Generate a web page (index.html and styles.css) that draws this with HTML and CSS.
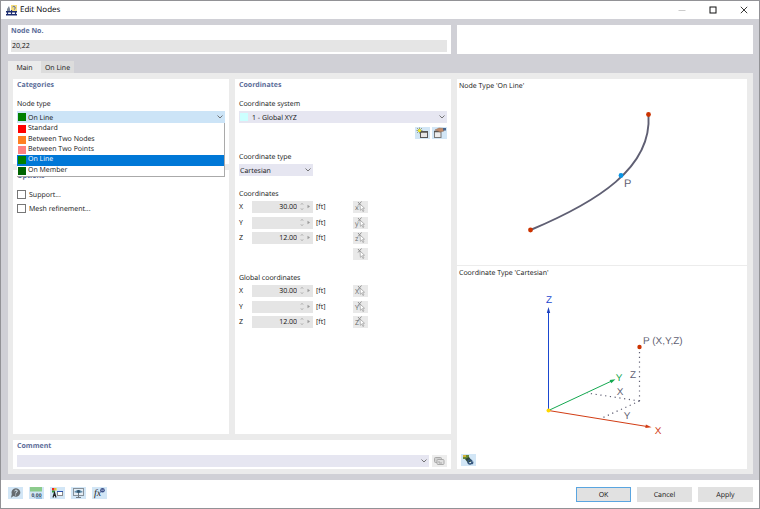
FILE: index.html
```html
<!DOCTYPE html>
<html lang="en">

<head>
  <meta charset="UTF-8">
  <title>Edit Nodes</title>
  <link rel="stylesheet" href="styles.css">
</head>

<body>
  <svg class="symbols" aria-hidden="true">
    <symbol id="chevron" viewBox="0 0 6 4">
      <path d="M0.5 0.5L3 3L5.5 0.5" fill="none" stroke="#666" stroke-width="0.9" />
    </symbol>
    <symbol id="spin" viewBox="0 0 12 12">
      <path d="M2 3.5L3 2.5L4 3.500M2 7.500L3 8.500L4 7.500" fill="none" stroke="#888" stroke-width="0.8" />
      <path d="M8.500 3.800L11 5.500L8.500 7.200Z" fill="#999" />
    </symbol>
    <symbol id="pick" viewBox="0 0 15 12">
      <path d="M5 1L8 4.500M8.500 0.500L5 4.500" stroke="#888" stroke-width="0.9" />
      <path d="M7 3L11.500 7.200L9.600 7.400L11 10L9.900 10.500L8.800 8L7.400 9.300Z" fill="#fff" stroke="#999" stroke-width="0.7" />
    </symbol>
  </svg>

  <div class="window">
    <header class="titlebar">
      <svg class="app_icon" viewBox="0 0 12 11">
        <rect x="5" y="0" width="6" height="6" fill="#f4dc7c" />
        <path d="M6.500 2Q8 0.500 9 2T8 4.500" fill="none" stroke="#5a6fae" />
        <path d="M1 4L3 1L4 4V7H1Z" fill="#7d8898" />
        <path d="M0 6H11V7.500H0ZM0 9H11V10.500H0Z" fill="#1d2d70" />
        <path d="M1.500 7V10M5.500 5V10M9.500 7V10" stroke="#1d2d70" stroke-width="1.2" />
      </svg>
      <h1>Edit Nodes</h1>
      <button class="win_btn" aria-label="Minimize"><svg viewBox="0 0 8 8"><path d="M0.500 4.500H7.500" stroke="#ccc" /></svg></button>
      <button class="win_btn" aria-label="Maximize"><svg viewBox="0 0 8 8"><rect x="1" y="1" width="6" height="6" fill="none" stroke="#111" /></svg></button>
      <button class="win_btn" aria-label="Close"><svg viewBox="0 0 8 8"><path d="M0.800 0.800L7.200 7.200M7.200 0.800L0.800 7.200" stroke="#222" stroke-width="0.9" /></svg></button>
    </header>

    <main class="content">
      <div class="top_row">
        <section class="panel node_no">
          <h2><label for="nodeNo">Node No.</label></h2>
          <input id="nodeNo" type="text" value="20,22">
        </section>
        <section class="panel"></section>
      </div>

      <nav class="tabs">
        <button class="tab active">Main</button>
        <button class="tab">On Line</button>
      </nav>

      <div class="page">
        <div class="col_left">
          <section class="panel categories">
            <h2>Categories</h2>
            <label class="caption" for="nodeType">Node type</label>
            <div class="combo open">
              <span class="swatch green"></span>
              <select id="nodeType">
                <option>On Line</option>
              </select>
              <svg class="chevron"><use href="#chevron" /></svg>
              <ul class="dropdown" role="listbox">
                <li role="option"><span class="swatch red"></span>Standard</li>
                <li role="option"><span class="swatch orange"></span>Between Two Nodes</li>
                <li role="option"><span class="swatch pink"></span>Between Two Points</li>
                <li role="option" class="selected" aria-selected="true"><span class="swatch green"></span>On Line</li>
                <li role="option"><span class="swatch darkgreen"></span>On Member</li>
              </ul>
            </div>
          </section>
          <section class="panel options">
            <h2>Options</h2>
            <label class="check"><input type="checkbox">Support...</label>
            <label class="check"><input type="checkbox">Mesh refinement...</label>
          </section>
        </div>

        <section class="panel coordinates">
          <h2>Coordinates</h2>
          <label class="caption" for="coordSystem">Coordinate system</label>
          <div class="combo">
            <span class="swatch cyan"></span>
            <select id="coordSystem" class="wide_indent">
              <option>1 - Global XYZ</option>
            </select>
            <svg class="chevron"><use href="#chevron" /></svg>
          </div>
          <div class="cs_buttons">
            <button class="icon_btn" aria-label="New coordinate system">
              <svg viewBox="0 0 15 12"><rect x="5.500" y="4.500" width="7" height="6" fill="#e4e4e4" stroke="#555" /><path d="M5 5H13" stroke="#555" stroke-width="1.500" /><path d="M2 1L7 6M7 1L2 6M4.500 0.500V6.500M1.500 3.500H7.500" stroke="#6c7438" stroke-width="0.6" /><circle cx="4.500" cy="3.500" r="1.500" fill="#f4ec20" /></svg>
            </button>
            <button class="icon_btn" aria-label="Edit coordinate system">
              <svg viewBox="0 0 15 12"><rect x="2.500" y="4.500" width="6.500" height="6" fill="#ececec" stroke="#777" /><path d="M2 4.500H9" stroke="#555" stroke-width="1.500" /><path d="M3 3L7 1L12 1.500V4L8 5L6 4Z" fill="#c38b68" stroke="#8b6650" stroke-width="0.5" /><path d="M11 1H14V3.500H11Z" fill="#49658b" /></svg>
            </button>
          </div>
          <label class="caption" for="coordType">Coordinate type</label>
          <div class="combo narrow">
            <select id="coordType">
              <option>Cartesian</option>
            </select>
            <svg class="chevron"><use href="#chevron" /></svg>
          </div>

          <h3 class="caption">Coordinates</h3>
          <div class="rows four">
            <div class="row">
              <label for="x">X</label>
              <div class="num"><input id="x" type="text" value="30.00"><svg><use href="#spin" /></svg></div>
              <span>[ft]</span>
              <button class="pick_btn" aria-label="Pick x"><span>x</span><svg><use href="#pick" /></svg></button>
            </div>
            <div class="row">
              <label for="y">Y</label>
              <div class="num"><input id="y" type="text"><svg><use href="#spin" /></svg></div>
              <span>[ft]</span>
              <button class="pick_btn" aria-label="Pick y"><span>y</span><svg><use href="#pick" /></svg></button>
            </div>
            <div class="row">
              <label for="z">Z</label>
              <div class="num"><input id="z" type="text" value="12.00"><svg><use href="#spin" /></svg></div>
              <span>[ft]</span>
              <button class="pick_btn" aria-label="Pick z"><span>z</span><svg><use href="#pick" /></svg></button>
            </div>
            <div class="row">
              <button class="pick_btn" aria-label="Pick point"><svg><use href="#pick" /></svg></button>
            </div>
          </div>

          <h3 class="caption">Global coordinates</h3>
          <div class="rows three">
            <div class="row">
              <label for="gx">X</label>
              <div class="num"><input id="gx" type="text" value="30.00"><svg><use href="#spin" /></svg></div>
              <span>[ft]</span>
              <button class="pick_btn" aria-label="Pick global X"><span>X</span><svg><use href="#pick" /></svg></button>
            </div>
            <div class="row">
              <label for="gy">Y</label>
              <div class="num"><input id="gy" type="text"><svg><use href="#spin" /></svg></div>
              <span>[ft]</span>
              <button class="pick_btn" aria-label="Pick global Y"><span>Y</span><svg><use href="#pick" /></svg></button>
            </div>
            <div class="row">
              <label for="gz">Z</label>
              <div class="num"><input id="gz" type="text" value="12.00"><svg><use href="#spin" /></svg></div>
              <span>[ft]</span>
              <button class="pick_btn" aria-label="Pick global Z"><span>Z</span><svg><use href="#pick" /></svg></button>
            </div>
          </div>
        </section>

        <section class="panel preview">
          <div class="figure line_figure">
            <h3>Node Type 'On Line'</h3>
            <svg viewBox="0 0 290 172">
              <path d="M73.500 137C140 109 195 75 191.500 22" fill="none" stroke="#5f5f73" stroke-width="1.900" />
              <circle cx="73.500" cy="137" r="2.400" fill="#cc3300" />
              <circle cx="191.500" cy="21.500" r="2.400" fill="#cc3300" />
              <circle cx="164" cy="82.500" r="2.400" fill="#0a96e6" />
              <text class="point" x="167" y="94">P</text>
            </svg>
          </div>
          <div class="figure axes_figure">
            <h3>Coordinate Type 'Cartesian'</h3>
            <svg viewBox="0 0 290 165">
              <g fill="none" stroke="#5f5f73" stroke-width="1.200" stroke-dasharray="1.200 3.600">
                <path d="M182.500 72V121" />
                <path d="M182.500 121L130 113" />
                <path d="M182.500 121L145 138" />
              </g>
              <path d="M91.500 130.500V31" stroke="#1a47d0" />
              <path d="M91.500 27L93.200 33H89.800Z" fill="#1a3fc0" />
              <path d="M91.500 130.500L154 101.300" stroke="#14a850" />
              <path d="M158.500 99.200L154.200 103.200L152.600 99.900Z" fill="#14a850" />
              <path d="M91.500 130.500L190 146.500" stroke="#d23c14" />
              <path d="M194.500 147.300L188.300 148.100L188.900 144.600Z" fill="#d23c14" />
              <circle cx="91.500" cy="130.500" r="2" fill="#ffd800" />
              <circle cx="182.500" cy="67" r="2.200" fill="#cc3300" />
              <g text-anchor="middle">
                <text class="axis_z" x="92" y="23">Z</text>
                <text class="axis_y" x="162" y="101">Y</text>
                <text class="axis_x" x="201" y="154">X</text>
                <text x="176" y="98">Z</text>
                <text x="163" y="115">X</text>
                <text x="170" y="139">Y</text>
              </g>
              <text x="186" y="64">P (X,Y,Z)</text>
            </svg>
          </div>
          <button class="icon_btn" aria-label="Preview settings">
            <svg viewBox="0 0 15 12"><rect x="2" y="1" width="6" height="4" fill="#688a36" /><path d="M2 1H5V3H2Z" fill="#d4b33a" /><path d="M4 5L8 3L11 7L7 9Z" fill="#2d4a3a" /><circle cx="9" cy="8" r="2" fill="none" stroke="#33547c" stroke-width="1.300" /><path d="M10 9L12.500 7.500L12 10.500Z" fill="#33547c" /></svg>
          </button>
        </section>

        <section class="panel comment">
          <h2><label for="comment">Comment</label></h2>
          <div class="comment_row">
            <div class="combo">
              <select id="comment"><option></option></select>
              <svg class="chevron"><use href="#chevron" /></svg>
            </div>
            <button class="icon_btn disabled" aria-label="Edit comment" disabled>
              <svg viewBox="0 0 15 12"><rect x="2.500" y="2.500" width="7" height="5" rx="1" fill="#d0d0d0" stroke="#aaa" /><rect x="5" y="4.500" width="7" height="5" rx="1" fill="#e0e0e0" stroke="#aaa" /><path d="M7 6V8H10" fill="none" stroke="#aaa" /></svg>
            </button>
          </div>
        </section>
      </div>
    </main>

    <footer class="footer">
      <button class="icon_btn" aria-label="Help">
        <svg viewBox="0 0 15 12"><path d="M8 1.200A4.300 4.300 0 1 1 5.500 9L3 10.800L3.800 7A4.300 4.300 0 0 1 8 1.200Z" fill="#666c70" /><path d="M6.500 4Q8 2 9.300 3.700Q9.500 5 7.800 5.800V6.500M7.600 7.500V8.500" fill="none" stroke="#dbeaf6" /></svg>
      </button>
      <button class="icon_btn" aria-label="Units">
        <svg viewBox="0 0 15 12"><rect x="1" y="0" width="12" height="4.500" fill="#8ccb8c" /><text x="7.500" y="10" text-anchor="middle" class="units">0,00</text><path d="M7 11H13" stroke="#3578b8" stroke-width="0.700" /></svg>
      </button>
      <button class="icon_btn" aria-label="Display">
        <svg viewBox="0 0 15 12"><rect x="2" y="1" width="2.500" height="2.500" fill="#e22" /><rect x="4.500" y="1" width="2" height="2.500" fill="#e8c82c" /><rect x="2" y="3.500" width="2.500" height="2" fill="#2a9a38" /><path d="M3 10.500L4.500 5.500L6 10.500M3.500 8.500H6" fill="none" stroke="#222" stroke-width="1.200" /><rect x="7.500" y="4.500" width="5" height="4" fill="#fff" stroke="#888" /><path d="M7 4.500H13" stroke="#2e53b0" /></svg>
      </button>
      <button class="icon_btn" aria-label="View">
        <svg viewBox="0 0 15 12"><rect x="2.500" y="1.500" width="10" height="7" fill="#e4edf4" stroke="#87919a" /><path d="M3 5Q7.500 1 12 5Q7.500 7 3 5Z" fill="#5c89a8" /><circle cx="7.500" cy="4.500" r="1.400" fill="#33536b" /><path d="M7.500 6V10.500M5 10.500H10" stroke="#737c84" /></svg>
      </button>
      <button class="icon_btn" aria-label="Formula">
        <svg viewBox="0 0 15 12"><text x="2" y="9" class="formula">fx</text><circle cx="10.500" cy="3.200" r="2.300" fill="#3a4f88" /><path d="M9 3.200H12" stroke="#d4dcf0" stroke-width="0.700" /></svg>
      </button>
      <div class="actions">
        <button class="btn primary">OK</button>
        <button class="btn">Cancel</button>
        <button class="btn">Apply</button>
      </div>
    </footer>
  </div>
</body>

</html>
```

FILE: styles.css
```css
* {
  box-sizing: border-box;
}

body {
  margin: 0;
  font-family: "Open Sans", "Noto Sans", sans-serif;
  font-size: 7px;
  line-height: 12px;
  color: #111;
  text-rendering: geometricPrecision;
}

h1, h2, h3, ul {
  margin: 0;
  padding: 0;
  font-size: 7px;
  font-weight: normal;
}

button, input, select {
  margin: 0;
  padding: 0;
  border: 0;
  border-radius: 0;
  background: none;
  font: inherit;
  color: inherit;
  text-rendering: inherit;
}

svg {
  display: block;
}

.symbols {
  position: absolute;
  width: 0;
  height: 0;
}

.window {
  display: flex;
  flex-direction: column;
  min-height: 100vh;
  border: 1px solid #929296;
  background-color: #fff;
}

/* title bar */
.titlebar {
  display: flex;
  align-items: center;
  height: 18px;
  padding-left: 5px;
}

.titlebar h1 {
  flex: 1;
  margin-left: 2px;
  font-size: 8px;
  color: #000;
}

.app_icon {
  width: 12px;
  height: 11px;
}

.win_btn {
  display: flex;
  align-items: center;
  justify-content: center;
  width: 31px;
  height: 18px;
}

.win_btn svg {
  width: 8px;
  height: 8px;
}

/* grey area */
.content {
  flex: 1;
  display: flex;
  flex-direction: column;
  padding: 6px 6px 6px 7px;
  background-color: #d0d0d6;
}

.top_row {
  display: grid;
  grid-template-columns: 443fr 296fr;
  gap: 6px;
  height: 29px;
}

.panel {
  background-color: #fff;
}

.panel h2 {
  height: 12px;
  line-height: 14px;
  font-weight: bold;
  color: #5b6c98;
}

.node_no {
  padding: 0 4px 0 3px;
}

.node_no h2 {
  margin-bottom: 3px;
}

.node_no input {
  display: block;
  width: 100%;
  height: 12px;
  padding: 1px 0 0 1px;
  background-color: #e5e5e5;
}

.tabs {
  display: flex;
  margin-top: 7px;
}

.tab {
  width: 33px;
  height: 12px;
  padding-top: 3px;
  line-height: 9px;
  background-color: #dcdcdc;
}

.tab.active {
  background-color: #ebebeb;
}

.page {
  flex: 1;
  display: grid;
  grid-template-columns: 216fr 216fr 290fr;
  grid-template-rows: 1fr 29px;
  gap: 6px;
  padding: 6px 6px 5px 5px;
  background-color: #ebebeb;
}

.col_left {
  display: flex;
  flex-direction: column;
  gap: 6px;
}

.categories, .options, .coordinates, .comment {
  padding: 0 4px;
}

.categories {
  height: 85px;
}

.options {
  flex: 1;
}

.caption {
  display: block;
  height: 12px;
  line-height: 15px;
}

.categories h2, .coordinates h2 {
  margin-bottom: 6px;
}

.categories .caption, .coordinates .caption {
  margin-bottom: 2px;
}

/* combo boxes */
.combo {
  position: relative;
  display: flex;
  align-items: center;
  height: 12px;
  padding-left: 1px;
  background-color: #e6e6f1;
}

.combo.open {
  background-color: #cce4f7;
}

.combo.narrow {
  width: 74px;
}

.combo select {
  appearance: none;
  flex: 1;
  height: 12px;
  padding-top: 2px;
}

.swatch + select {
  padding-left: 2px;
}

.swatch + .wide_indent {
  padding-left: 4px;
}

.chevron {
  width: 6px;
  height: 4px;
  margin-right: 2px;
}

.swatch {
  width: 8px;
  height: 8px;
}

.red { background-color: #ff0000; }
.orange { background-color: #ff8022; }
.pink { background-color: #ff8080; }
.green { background-color: #008000; }
.darkgreen { background-color: #006400; }
.cyan { background-color: #ccffff; }

.dropdown {
  position: absolute;
  top: 12px;
  left: 0;
  right: 0;
  z-index: 1;
  display: flex;
  flex-direction: column;
  height: 54px;
  padding-top: 1px;
  border-right: 1px solid #aaa;
  border-bottom: 1px solid #aaa;
  background-color: #fff;
  list-style: none;
}

.dropdown li {
  flex: 1;
  display: flex;
  align-items: center;
  gap: 2px;
  padding-left: 1px;
  line-height: 10px;
}

.dropdown .selected {
  background-color: #0078d7;
  color: #fff;
}

.options h2 {
  margin-bottom: 6px;
}

.check {
  display: flex;
  gap: 3px;
  height: 14px;
  line-height: 15px;
}

.check input {
  appearance: none;
  width: 9px;
  height: 9px;
  margin-top: 2px;
  border: 1px solid #777;
  background-color: #fff;
}

/* coordinates */
.cs_buttons {
  display: flex;
  justify-content: flex-end;
  gap: 2px;
  margin: 4px 0 11px;
}

.icon_btn {
  width: 15px;
  height: 12px;
  background-color: #d2e6f6;
}

.icon_btn.disabled {
  background-color: #ededed;
}

.coordinates h3 {
  margin-top: 11px;
}

.rows {
  display: flex;
  flex-direction: column;
  justify-content: space-between;
}

.rows.four {
  height: 59px;
}

.rows.three {
  height: 43px;
}

.row {
  display: grid;
  grid-template-columns: 13px 61px 40px 15px;
  height: 12px;
  line-height: 14px;
}

.row > span {
  padding-left: 3px;
}

.num {
  display: flex;
  height: 12px;
  background-color: #e5e5e5;
}

.num input {
  flex: 1;
  min-width: 0;
  padding-top: 1px;
  text-align: right;
}

.num svg {
  width: 12px;
  height: 12px;
  margin: 0 2px;
}

.pick_btn {
  grid-column: 4;
  position: relative;
  height: 12px;
  background-color: #e9e9e9;
  color: #666;
}

.pick_btn span {
  position: absolute;
  left: 2px;
  bottom: 0;
  line-height: 8px;
}

.pick_btn svg {
  width: 15px;
  height: 12px;
}

/* preview */
.preview {
  grid-column: 3;
  grid-row: 1 / 3;
  display: flex;
  flex-direction: column;
}

.figure h3 {
  padding: 2px 0 0 2px;
}

.figure text {
  font-family: "Liberation Sans", Arial, sans-serif;
  font-size: 10px;
  fill: #5f5f73;
}

.figure .point {
  font-size: 11px;
}

.figure .axis_x { fill: #d23c14; }
.figure .axis_y { fill: #14a850; }
.figure .axis_z { fill: #1a47d0; }

.line_figure {
  border-bottom: 1px solid #ececec;
}

.preview .icon_btn {
  margin: auto 0 3px 4px;
}

/* comment */
.comment {
  grid-column: 1 / 3;
}

.comment h2 {
  margin-bottom: 3px;
}

.comment_row {
  display: flex;
  gap: 3px;
}

.comment_row .combo {
  flex: 1;
}

/* footer */
.footer {
  display: flex;
  gap: 6px;
  height: 28px;
  padding: 7px 6px 0 7px;
}

.units {
  font-size: 5px;
  font-weight: bold;
  fill: #31475a;
}

.formula {
  font-family: "Liberation Serif", serif;
  font-size: 10px;
  font-style: italic;
  fill: #222;
}

.actions {
  display: flex;
  gap: 6px;
  margin-left: auto;
}

.btn {
  width: 55px;
  height: 15px;
  padding-top: 2px;
  background-color: #e1e1e1;
}

.btn.primary {
  border: 1px solid #5aa5e0;
}
```
